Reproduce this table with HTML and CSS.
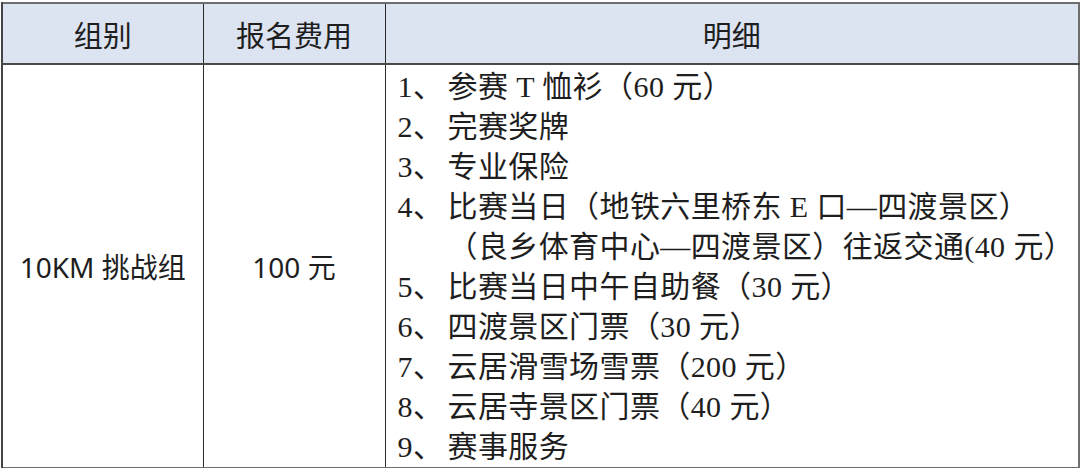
FILE: index.html
```html
<!DOCTYPE html>
<html lang="zh-CN">
<head>
<meta charset="utf-8">
<title>报名费用</title>
<link rel="stylesheet" href="styles.css">
</head>
<body>
<div class="wrap">
  <table class="fee-table">
    <colgroup>
      <col class="c-group">
      <col class="c-fee">
      <col class="c-detail">
    </colgroup>
    <thead>
      <tr>
        <th>组别</th>
        <th>报名费用</th>
        <th>明细</th>
      </tr>
    </thead>
    <tbody>
      <tr>
        <td class="center">10KM 挑战组</td>
        <td class="center">100 元</td>
        <td class="detail">
          <ul class="items">
            <li><span class="no">1、</span><span class="txt">参赛 T 恤衫（60 元）</span></li>
            <li><span class="no">2、</span><span class="txt">完赛奖牌</span></li>
            <li><span class="no">3、</span><span class="txt">专业保险</span></li>
            <li><span class="no">4、</span><span class="txt">比赛当日（地铁六里桥东 E 口—四渡景区）<br>（良乡体育中心—四渡景区）往返交通(40 元）</span></li>
            <li><span class="no">5、</span><span class="txt">比赛当日中午自助餐（30 元）</span></li>
            <li><span class="no">6、</span><span class="txt">四渡景区门票（30 元）</span></li>
            <li><span class="no">7、</span><span class="txt">云居滑雪场雪票（200 元）</span></li>
            <li><span class="no">8、</span><span class="txt">云居寺景区门票（40 元）</span></li>
            <li><span class="no">9、</span><span class="txt">赛事服务</span></li>
          </ul>
        </td>
      </tr>
    </tbody>
  </table>
</div>
</body>
</html>
```

FILE: styles.css
```css
html, body {
  margin: 0;
  padding: 0;
  background: #ffffff;
}

.wrap {
  padding: 2px 2px 0 1px;
}

.fee-table {
  width: 1077px;
  border-collapse: collapse;
  table-layout: fixed;
  border: 2px solid #6e6e6e;
  color: #1e1e1e;
}

.c-group { width: 201px; }
.c-fee { width: 182px; }
.c-detail { width: 694px; }

.fee-table th {
  height: 59px;
  padding: 0;
  background: #dce3f1;
  font-family: "Noto Sans", "Noto Sans CJK SC", sans-serif;
  font-size: 29px;
  font-weight: normal;
  text-align: center;
  vertical-align: middle;
  border-left: 1px solid #2a2a2a;
  border-bottom: 2px solid #4a4a4a;
}

.fee-table td {
  height: 399px;
  padding: 0;
  border-left: 1px solid #2a2a2a;
}

.fee-table th:first-child,
.fee-table td:first-child {
  border-left: 2px solid #444;
}

.center {
  text-align: center;
  vertical-align: middle;
  font-family: "Noto Sans", "Noto Sans CJK SC", sans-serif;
  font-size: 28px;
}

.detail {
  vertical-align: top;
  font-family: "Liberation Serif", "Noto Sans CJK SC", serif;
  font-size: 30px;
  letter-spacing: 0.4px;
}

.items {
  list-style: none;
  margin: 0;
  padding: 2px 0 0 12px;
}

.items li {
  display: flex;
  line-height: 40px;
  white-space: nowrap;
}

.no {
  flex: 0 0 50px;
}

.txt {
  flex: 1 1 auto;
}
```
